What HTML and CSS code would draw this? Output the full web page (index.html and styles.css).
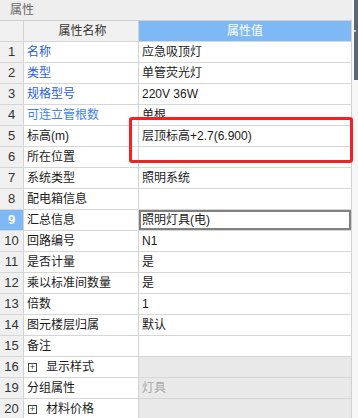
FILE: index.html
```html
<!DOCTYPE html>
<html lang="zh">
<head>
<meta charset="utf-8">
<link rel="stylesheet" href="styles.css">
</head>
<body>
<div class="panel">
  <div class="main">
    <div class="title">属性</div>
    <div class="grid">
      <div class="row head"><div class="c num"></div><div class="c name hname">属性名称</div><div class="c val hval">属性值</div></div>
      <div class="row"><div class="c num">1</div><div class="c name blue">名称</div><div class="c val">应急吸顶灯</div></div>
      <div class="row"><div class="c num">2</div><div class="c name blue">类型</div><div class="c val">单管荧光灯</div></div>
      <div class="row"><div class="c num">3</div><div class="c name blue">规格型号</div><div class="c val">220V 36W</div></div>
      <div class="row"><div class="c num">4</div><div class="c name lblue">可连立管根数</div><div class="c val">单根</div></div>
      <div class="row"><div class="c num">5</div><div class="c name">标高(m)</div><div class="c val">层顶标高+2.7(6.900)</div></div>
      <div class="row"><div class="c num">6</div><div class="c name">所在位置</div><div class="c val"></div></div>
      <div class="row"><div class="c num">7</div><div class="c name">系统类型</div><div class="c val">照明系统</div></div>
      <div class="row"><div class="c num">8</div><div class="c name">配电箱信息</div><div class="c val"></div></div>
      <div class="row"><div class="c num sel">9</div><div class="c name">汇总信息</div><div class="c val focus">照明灯具(电)</div></div>
      <div class="row"><div class="c num">10</div><div class="c name">回路编号</div><div class="c val">N1</div></div>
      <div class="row"><div class="c num">11</div><div class="c name">是否计量</div><div class="c val">是</div></div>
      <div class="row"><div class="c num">12</div><div class="c name">乘以标准间数量</div><div class="c val">是</div></div>
      <div class="row"><div class="c num">13</div><div class="c name">倍数</div><div class="c val">1</div></div>
      <div class="row"><div class="c num">14</div><div class="c name">图元楼层归属</div><div class="c val">默认</div></div>
      <div class="row"><div class="c num">15</div><div class="c name">备注</div><div class="c val"></div></div>
      <div class="row"><div class="c num">16</div><div class="c name"><span class="plus">+</span>显示样式</div><div class="c val grey"></div></div>
      <div class="row"><div class="c num">19</div><div class="c name">分组属性</div><div class="c val grey dim">灯具</div></div>
      <div class="row"><div class="c num">20</div><div class="c name"><span class="plus">+</span>材料价格</div><div class="c val grey"></div></div>
    </div>
  </div>
  <div class="scroll"><div class="thumb"><span class="tick"></span></div></div>
  <div class="mark"></div>
</div>
</body>
</html>
```
FILE: styles.css
```css
html, body {
  margin: 0;
  padding: 0;
  background: #ffffff;
}
body {
  width: 358px;
  height: 418px;
  overflow: hidden;
  font-family: "Liberation Sans", "Noto Sans CJK SC", sans-serif;
  font-size: 12px;
  color: #1a1a1a;
}
.panel {
  position: relative;
  display: flex;
  width: 358px;
  height: 418px;
}
.main {
  width: 352px;
  display: flex;
  flex-direction: column;
}
.title {
  height: 21px;
  line-height: 21px;
  background: #eeeeee;
  color: #6a6a6a;
  padding-left: 10px;
  border-bottom: 1px solid #cfcfcf;
  box-sizing: border-box;
  width: 354px;
}
.grid {
  display: flex;
  flex-direction: column;
  border-right: 1px solid #d2d2d2;
}
.row {
  display: flex;
  height: 21px;
  border-bottom: 1px solid #d6d6d6;
  box-sizing: border-box;
}
.c {
  height: 20px;
  line-height: 20px;
  box-sizing: border-box;
  white-space: nowrap;
  overflow: hidden;
}
.num {
  width: 24px;
  border-right: 1px solid #d2d2d2;
  background: #f0f0f0;
  text-align: center;
  color: #333;
  font-size: 13px;
}
.name {
  width: 115px;
  border-right: 1px solid #d2d2d2;
  padding-left: 3px;
  display: flex;
  align-items: center;
}
.val {
  flex: 1;
  padding-left: 3px;
}
.head .name {
  justify-content: center;
  background: #f0f0f0;
  color: #333;
}
.hval {
  background: #7fb9f5;
  color: #ffffff;
  text-align: center;
  padding-left: 0;
}
.blue { color: #2a5ee0; }
.lblue { color: #3f7ff0; }
.sel {
  background: #7fb9f5;
  color: #ffffff;
  font-weight: bold;
}
.focus {
  box-shadow: inset 0 0 0 2px #808080;
}
.grey { background: #e9e9e9; }
.dim { color: #a8a8a8; }
.plus {
  width: 9px;
  height: 9px;
  border: 1px solid #444;
  box-sizing: border-box;
  font-size: 9px;
  line-height: 7px;
  text-align: center;
  margin-right: 9px;
  margin-left: 1px;
  color: #333;
}
.scroll {
  width: 6px;
  background: #f7f7f7;
  display: flex;
  justify-content: flex-end;
}
.thumb {
  position: relative;
  width: 4px;
  height: 80px;
  background: #5c6775;
}
.tick {
  position: absolute;
  left: 0;
  top: 30px;
  width: 2px;
  height: 2px;
  background: #c8ccd2;
}
.mark {
  position: absolute;
  left: 129px;
  top: 117px;
  width: 224px;
  height: 46px;
  border: 3px solid #f52020;
  border-radius: 3px;
  box-sizing: border-box;
}
```
